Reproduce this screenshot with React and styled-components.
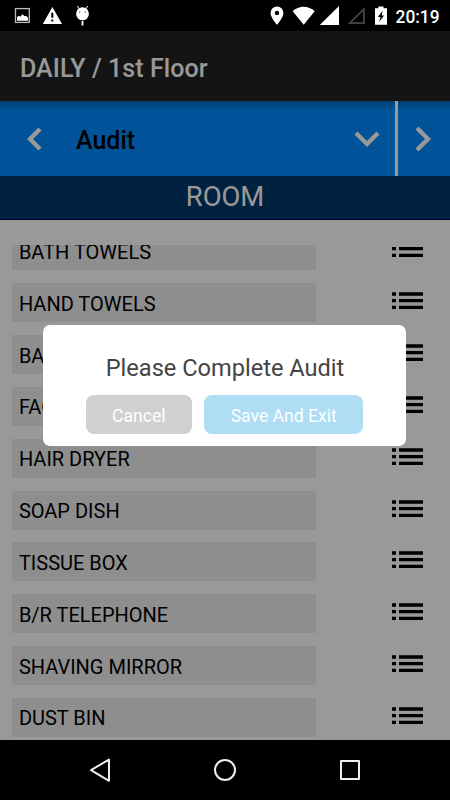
import React from "react";
import styled, {createGlobalStyle} from "styled-components";

const GlobalStyle = createGlobalStyle`
  * {
    box-sizing: border-box;
  }

  body {
    margin: 0;
    background: #000;
    font-family: Roboto, "Liberation Sans", sans-serif;
  }
`;

const Screen = styled.div`
  width: 450px;
  height: 800px;
  display: flex;
  flex-direction: column;
  overflow: hidden;
  background: #000;
`;

const StatusBar = styled.div`
  height: 31px;
  flex: none;
  background: #000;

  svg {
    display: block;
  }

  text {
    font-size: 18.2px;
    font-weight: 500;
    fill: #fff;
  }
`;

const Page = styled.div`
  position: relative;
  height: 709px;
  flex: none;
  display: flex;
  flex-direction: column;
  background: #fff;
`;

const ActionBar = styled.header`
  height: 70px;
  flex: none;
  padding: 4px 0 0 20px;
  display: flex;
  align-items: center;
  background: #222;
  color: #fff;
  font-size: 25px;
  font-weight: 500;
  letter-spacing: 0.06px;
  white-space: nowrap;
`;

const Toolbar = styled.div`
  height: 75px;
  flex: none;
  display: flex;
  background: linear-gradient(#006bc0, #008aff 9px);
`;

const Selector = styled.div`
  width: 395px;
  display: flex;
  align-items: center;
  padding: 1px 15px 0 27px;
`;

const SelectorTitle = styled.div`
  flex: 1;
  margin-left: 34px;
  padding-top: 3px;
  font-size: 25px;
  font-weight: 500;
  color: #000;
`;

const NextButton = styled.div`
  flex: 1;
  display: flex;
  align-items: center;
  padding: 1px 0 0 16px;
  border-left: 3px solid #fff;
`;

const Chevron = styled.svg`
  width: ${({w}) => w || 15}px;
  height: ${({h}) => h || 26}px;
  fill: none;
  stroke: #fff;
  stroke-width: 4.3;
`;

const Section = styled.div`
  height: 44px;
  flex: none;
  background: #00386b;
  border-bottom: 1px solid #000050;
  color: #fff;
  font-size: 27.4px;
  line-height: 43px;
  text-align: center;
`;

const List = styled.div`
  flex: 1;
  margin-top: 25px;
  min-height: 0;
  overflow: hidden;
`;

const Rows = styled.div`
  margin-top: -13.6px;
`;

const Row = styled.div`
  height: 51.84px;
  display: flex;
  align-items: flex-start;
  padding-left: 12.4px;
`;

const RowLabel = styled.div`
  width: 303.6px;
  height: 39px;
  padding: 1.55px 0 0 6.5px;
  background: #ededed;
  font-size: 20px;
  line-height: 39px;
  color: #000;
  white-space: nowrap;
`;

const ListIcon = styled.svg`
  width: 31px;
  height: 18px;
  margin: 9px 0 0 76.3px;
`;

const Overlay = styled.div`
  position: absolute;
  inset: 0;
  display: flex;
  justify-content: center;
  align-items: flex-start;
  padding: 294px 1px 0 0;
  background: rgba(0, 0, 0, .4);
`;

const Dialog = styled.div`
  width: 362.6px;
  height: 121.4px;
  padding-top: 28px;
  border-radius: 7px;
  background: #fff;
`;

const DialogTitle = styled.div`
  height: 42px;
  padding-left: 1px;
  font-size: 23.6px;
  line-height: 30px;
  text-align: center;
  color: #444;
`;

const DialogButtons = styled.div`
  display: flex;
  justify-content: center;
  gap: 12.5px;
`;

const DialogButton = styled.button`
  width: ${({primary}) => (primary ? "159px" : "106px")};
  height: 39px;
  padding: 2px 0 0;
  border: 0;
  border-radius: 8px;
  background: ${({primary}) => (primary ? "#aeddf4" : "#d0d0d0")};
  color: #fff;
  font: 400 17.6px Roboto, sans-serif;
`;

const NavBar = styled.nav`
  height: 60px;
  flex: none;
  background: #000;

  svg {
    display: block;
  }
`;

const items = [
    "BATH TOWELS",
    "HAND TOWELS",
    "BATH MAT",
    "FACE TOWELS",
    "HAIR DRYER",
    "SOAP DISH",
    "TISSUE BOX",
    "B/R TELEPHONE",
    "SHAVING MIRROR",
    "DUST BIN",
];

const StatusIcons = () => (
    <svg width="450" height="31" viewBox="0 0 450 31" fill="#fff">
        {/* picture */}
        <rect x="15.5" y="8.6" width="13.8" height="13.8" fill="none" stroke="#bbb" strokeWidth="1.3"/>
        <path d="M17 20.7V17l1.5-1 2 .5 2-2.2 2 2 1.5-.5 2 2v2.9z"/>
        {/* warning */}
        <path fillRule="evenodd" d="M52.4 7 62 24H42.8zM51.3 12.8v5h2v-5zm0 6.6v2h2v-2z"/>
        {/* android head on a stick */}
        <path d="M77.3 6l2 3M87.7 6l-2 3" stroke="#fff" strokeWidth="1"/>
        <ellipse cx="82.5" cy="13.8" rx="6.4" ry="6.5"/>
        <path d="M79.2 11.5h1v1h-1zM84.8 11.5h1v1h-1z" fill="#000"/>
        <path d="M81.6 21h1.8v4.5h-1.8z"/>
        {/* location */}
        <path fillRule="evenodd" d="M277 6.5a6.4 6.4 0 0 0-6.4 6.4c0 4.8 6.4 11.8 6.4 11.8s6.4-7 6.4-11.8a6.4 6.4 0 0 0-6.4-6.4zm0 4.2a2.2 2.2 0 1 1 0 4.4 2.2 2.2 0 0 1 0-4.4z"/>
        {/* wifi */}
        <path d="M292.7 11.2c6-6 15.8-6 22 0L303.7 24.7z"/>
        {/* signal */}
        <path d="M339 6v19h-19.2z"/>
        <path d="M363.9 9.2v14h-14.2z" fill="none" stroke="#444" strokeWidth="1.8"/>
        {/* battery */}
        <path fillRule="evenodd" d="M378.3 6.4h5.2v1.9h3.5v16.5h-12V8.3h3.3zM382.7 10.8l-4.9 6.2h2.7l-1.4 5 5-6.5h-2.5z"/>
        <text x="395.6" y="23" textLength="44" lengthAdjust="spacingAndGlyphs">20:19</text>
    </svg>
);

const MenuIcon = () => (
    <ListIcon viewBox="0 0 31 18">
        <path d="M0 2h4M7 2h24M0 8.7h4M7 8.7h24M0 15.4h4M7 15.4h24" stroke="#000" strokeWidth="3.3"/>
    </ListIcon>
);

const App = () => (
    <>
        <GlobalStyle/>
        <Screen>
            <StatusBar><StatusIcons/></StatusBar>
            <Page>
                <ActionBar>DAILY / 1st Floor</ActionBar>
                <Toolbar>
                    <Selector>
                        <Chevron viewBox="0 0 15 26"><path d="M13 3 3 13l10 10"/></Chevron>
                        <SelectorTitle>Audit</SelectorTitle>
                        <Chevron w={26} h={16} viewBox="0 0 26 16"><path d="M2 2l11 11L24 2"/></Chevron>
                    </Selector>
                    <NextButton>
                        <Chevron w={17} viewBox="0 0 17 26"><path d="M3 2l11 11L3 24"/></Chevron>
                    </NextButton>
                </Toolbar>
                <Section>ROOM</Section>
                <List>
                    <Rows>
                        {items.map((item) => (
                            <Row key={item}>
                                <RowLabel>{item}</RowLabel>
                                <MenuIcon/>
                            </Row>
                        ))}
                    </Rows>
                </List>
                <Overlay>
                    <Dialog>
                        <DialogTitle>Please Complete Audit</DialogTitle>
                        <DialogButtons>
                            <DialogButton>Cancel</DialogButton>
                            <DialogButton primary="true">Save And Exit</DialogButton>
                        </DialogButtons>
                    </Dialog>
                </Overlay>
            </Page>
            <NavBar>
                <svg width="450" height="60" viewBox="0 0 450 60" fill="none" stroke="#eee" strokeWidth="2" strokeLinejoin="round">
                    <path d="M109 19.5v21.3L91 30.2z"/>
                    <circle cx="225" cy="30" r="10"/>
                    <rect x="341" y="21" width="18" height="18"/>
                </svg>
            </NavBar>
        </Screen>
    </>
);

export default App;
